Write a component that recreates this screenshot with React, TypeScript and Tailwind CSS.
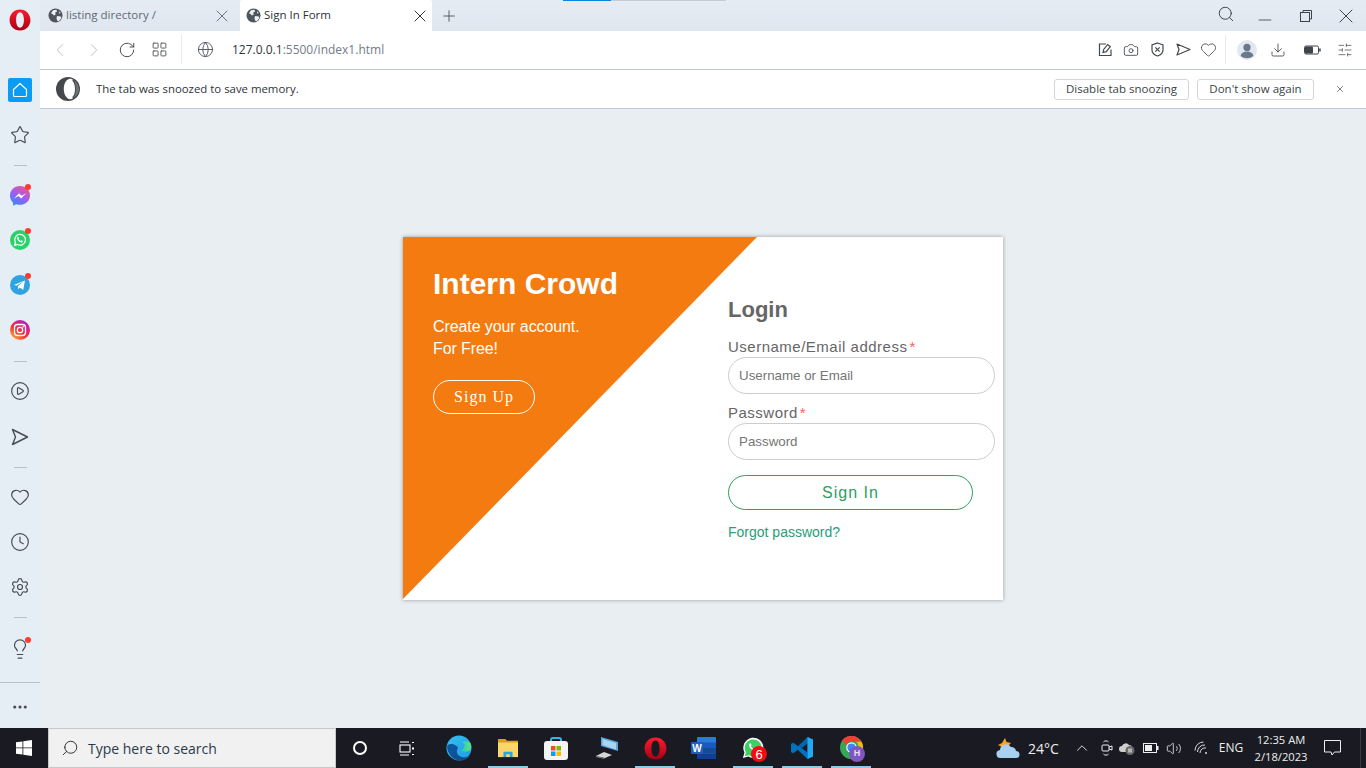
import React from "react";
import { Search, X, Plus, Minus, ChevronLeft, ChevronRight, RotateCw, LayoutGrid, Globe, Camera, Heart, Download, SlidersHorizontal, Star, CirclePlay, Clock, Settings, Lightbulb, Ellipsis, ChevronUp, Volume2 } from "lucide-react";

const ui = "font-['Open_Sans','Noto_Sans',sans-serif]";

function OperaLogo({ size = 22, id }: { size?: number; id: string }) {
  return (
    <svg width={size} height={size} viewBox="0 0 24 24">
      <defs>
        <linearGradient id={id} x1="0" y1="0" x2="0" y2="1">
          <stop offset="0" stopColor="#ff1b2d" />
          <stop offset="1" stopColor="#a70014" />
        </linearGradient>
      </defs>
      <path fillRule="evenodd" fill={`url(#${id})`} d="M12 0.5C5.4 0.5 0.6 5.6 0.6 12S5.4 23.5 12 23.5 23.4 18.4 23.4 12 18.6 0.5 12 0.5ZM12 3.6c2.6 0 4.3 3.7 4.3 8.4s-1.7 8.4-4.3 8.4S7.700 16.700 7.700 12 9.400 3.600 12 3.600Z" />
    </svg>
  );
}

function OperaDark() {
  return (
    <svg width="24" height="24" viewBox="0 0 24 24">
      <circle cx="12" cy="12" r="12" fill="#45494d" />
      <path fill="#fff" d="M14 1.800c-3.400.2-6.200 4.600-6.200 10.200s2.800 10 6.200 10.200c1 0 2-.3 3-1-1.800-1.900-3-5.300-3-9.200s1.200-7.300 3-9.200c-1-.7-2-1-3-1Z" />
      <path fill="#fff" d="M14.500 2.600c3.500 1.800 4.500 5.500 4.500 9.400s-1 7.600-4.500 9.400c-2.500-1.400-4-5-4-9.400s1.500-8 4-9.400Z" />
      <path fill="#6d7175" d="M17 2.700c3 1.700 6 4.700 6 9.300s-3 7.600-6 9.300c2-2 3-5.500 3-9.300s-1-7.300-3-9.300Z" />
    </svg>
  );
}

function TabGlobe() {
  return (
    <svg width="15" height="15" viewBox="0 0 15 15" className="shrink-0">
      <circle cx="7.500" cy="7.500" r="7" fill="#50565e" />
      <path fill="#eef2f6" d="M5 2.200 8.500 1.800 9 3.400 7 4.800 7.800 6.200 6 7.500 4.600 6 3 5.200ZM9 8l3.800 .5.600 1.500-2.600 3.200-1.500-.4-.8-2.300ZM11 3.200l1.800 1.800-1.500.6Z" />
    </svg>
  );
}

function Badge() {
  return <span className="absolute right-[9px] top-[3px] h-[6px] w-[6px] rounded-full bg-[#ff3b30]" />;
}

function SideIcon({ children, dot = false, className = "" }: { children: React.ReactNode; dot?: boolean; className?: string }) {
  return (
    <div className={`relative flex h-[30px] w-[40px] shrink-0 items-center justify-center ${className}`}>
      {children}
      {dot && <Badge />}
    </div>
  );
}

function Sep({ className = "" }: { className?: string }) {
  return <div className={`h-px w-[13px] shrink-0 bg-[#b9c2cb] ${className}`} />;
}

function Sidebar() {
  const c = "#474c54";
  return (
    <aside className="flex w-[40px] shrink-0 flex-col items-center bg-[#e5edf5]">
      <div className="flex h-[40px] items-center justify-center">
        <OperaLogo id="op1" />
      </div>
      <div className="mt-[35px] flex h-[30px] shrink-0 items-center justify-center">
        <div className="flex h-[24px] w-[24px] items-center justify-center rounded-[2px] bg-[#0a9bf5]">
          <svg width="16" height="16" viewBox="0 0 16 16" fill="none" stroke="#fff" strokeWidth="1.200" strokeLinejoin="round"><path d="M8 1.500 14.500 7.500V13.500a1 1 0 0 1-1 1h-11a1 1 0 0 1-1-1V7.500Z" /></svg>
        </div>
      </div>
      <div className="mt-[15px] flex flex-col items-center gap-[15px]">
        <SideIcon><Star size={20} color={c} strokeWidth={1.4} /></SideIcon>
        <Sep />
        <SideIcon dot>
          <svg width="20" height="20" viewBox="0 0 20 20">
            <defs>
              <linearGradient id="ms" x1="0.8" y1="0" x2="0.2" y2="1">
                <stop offset="0" stopColor="#f0568c" />
                <stop offset="0.5" stopColor="#a05cf0" />
                <stop offset="1" stopColor="#2f8dfb" />
              </linearGradient>
            </defs>
            <path fill="url(#ms)" d="M10 0C4.400 0 0 4.100 0 9.600c0 2.900 1.200 5.400 3.100 7.100v3.100l3-1.600c1.200.4 2.500.6 3.900.6 5.600 0 10-4.100 10-9.600S15.600 0 10 0Z" />
            <path fill="#fff" d="M4 12.500 9 7.200l2.600 2.600 4.600-2.600-5 5.400-2.600-2.700Z" />
          </svg>
        </SideIcon>
        <SideIcon dot className="-mt-px">
          <svg width="20" height="20" viewBox="0 0 20 20">
            <circle cx="10" cy="10" r="10" fill="#25d366" />
            <path fill="none" stroke="#fff" strokeWidth="1.300" d="M4.600 15.400 5.400 12.400a5.400 5.400 0 1 1 2.100 2.100Z" />
            <path fill="#fff" d="M8 6.800c.4 0 .5.100.7.500l.4.900-.5.800c.4.800 1.200 1.600 2.200 2l.7-.7.900.4c.5.200.6.400.5.800-.2.700-.9 1-1.600.9-2.200-.3-3.700-2-4.100-3.700-.2-1 .2-1.800.8-1.900Z" />
          </svg>
        </SideIcon>
        <SideIcon dot>
          <svg width="20" height="20" viewBox="0 0 20 20">
            <circle cx="10" cy="10" r="10" fill="#2fa3e0" />
            <path fill="#fff" d="M3.800 10 15 5.400l-1.800 9.600-3.300-2.400-1.700 1.700-.3-3 5-4.600-6.200 3.800Z" />
          </svg>
        </SideIcon>
        <SideIcon>
          <svg width="20" height="20" viewBox="0 0 20 20">
            <defs>
              <linearGradient id="ig" x1="0.1" y1="1" x2="0.9" y2="0">
                <stop offset="0" stopColor="#fdc13c" />
                <stop offset="0.4" stopColor="#f5342d" />
                <stop offset="0.75" stopColor="#d01f9a" />
                <stop offset="1" stopColor="#8a2be2" />
              </linearGradient>
            </defs>
            <circle cx="10" cy="10" r="10" fill="url(#ig)" />
            <rect x="4.500" y="4.500" width="11" height="11" rx="3" fill="none" stroke="#fff" strokeWidth="1.300" />
            <circle cx="10" cy="10" r="2.700" fill="none" stroke="#fff" strokeWidth="1.300" />
            <circle cx="13.200" cy="6.800" r=".8" fill="#fff" />
          </svg>
        </SideIcon>
        <Sep className="-mb-px mt-px" />
        <SideIcon><CirclePlay size={20} color={c} strokeWidth={1.4} /></SideIcon>
        <SideIcon className="mt-px">
          <svg width="18" height="18" viewBox="0 0 18 18" fill="none" stroke={c} strokeWidth="1.400" strokeLinejoin="round"><path d="M1.500 1.500 16.500 9 1.500 16.500 4.500 9Z" /></svg>
        </SideIcon>
        <Sep className="-mb-px" />
        <SideIcon><Heart size={20} color={c} strokeWidth={1.4} /></SideIcon>
        <SideIcon><Clock size={20} color={c} strokeWidth={1.4} /></SideIcon>
        <SideIcon><Settings size={20} color={c} strokeWidth={1.4} /></SideIcon>
        <Sep className="-mb-px" />
        <SideIcon>
          <Lightbulb size={22} color={c} strokeWidth={1.3} className="mt-[3px]" />
          <span className="absolute right-[9px] top-[5px] h-[6px] w-[6px] rounded-full bg-[#ff3b30]" />
        </SideIcon>
      </div>
      <div className="mt-auto flex h-[46px] w-full items-center justify-center border-t border-[#b9c2cb] pt-[2px]">
        <Ellipsis size={18} color={c} strokeWidth={2.2} />
      </div>
    </aside>
  );
}

function TabBar() {
  return (
    <div className="relative flex h-[31px] shrink-0 items-stretch bg-gradient-to-b from-[#e6ecf4] to-[#dfe6ef] text-[11.5px]">
      <div className="absolute left-[523px] top-0 h-px w-[48px] bg-[#0a84e0]" />
      <div className="absolute left-[571px] top-0 h-px w-[115px] bg-[#c4ccd6]" />
      <div className="flex w-[198px] items-center pl-[8px] pr-[6px] text-[#5f6a76]">
        <TabGlobe />
        <span className="mb-px ml-[3px]">listing directory /</span>
        <X size={20} color="#5f6a76" strokeWidth={1.1} className="ml-auto" />
      </div>
      <div className="ml-[2px] flex w-[192px] items-center rounded-t-[2px] bg-white pl-[6px] pr-[2px] text-[#2c323a]">
        <TabGlobe />
        <span className="mb-px ml-[3px]">Sign In Form</span>
        <X size={20} color="#30353b" strokeWidth={1.2} className="ml-auto" />
      </div>
      <div className="ml-[8px] flex items-center">
        <Plus size={18} color="#3d434a" strokeWidth={1.1} />
      </div>
      <div className="ml-auto flex items-center">
        <Search size={18} color="#3d434a" strokeWidth={1.3} className="mb-[3px]" />
        <div className="ml-[20px] mt-[9px] flex"><Minus size={20} color="#3d434a" strokeWidth={1} /></div>
        <svg className="ml-[24px]" width="14" height="14" viewBox="0 0 14 14" fill="none" stroke="#3d434a" strokeWidth="1"><rect x="1.500" y="3.500" width="9" height="9" /><path d="M4 3.500V1.500h8.500V10h-2" /></svg>
        <div className="ml-[21px] mr-[8px] flex"><X size={24} color="#3d434a" strokeWidth={1} /></div>
      </div>
    </div>
  );
}

function ToolBar() {
  const c = "#43484f";
  return (
    <div className="flex h-[39px] shrink-0 items-center border-b border-[#bcc5cf] bg-white pb-[1px]">
      <div className="ml-[9px] flex"><ChevronLeft size={22} color="#c6ccd3" strokeWidth={1.1} /></div>
      <div className="ml-[12px] flex"><ChevronRight size={22} color="#c6ccd3" strokeWidth={1.1} /></div>
      <div className="ml-[13px] flex"><RotateCw size={18} color={c} strokeWidth={1.3} /></div>
      <div className="ml-[15px] flex"><LayoutGrid size={17} color={c} strokeWidth={1.2} /></div>
      <div className="ml-[13px] h-[29px] w-px bg-[#e6e9ed]" />
      <div className="ml-[15px] flex"><Globe size={17} color={c} strokeWidth={1.2} /></div>
      <span className="ml-[18px] text-[12px] text-[#2f343a]">127.0.0.1<span className="text-[#727c88]">:5500/index1.html</span></span>
      <div className="ml-auto flex items-center">
        <svg width="15" height="15" viewBox="0 0 15 15" fill="none" stroke={c} strokeWidth="1.200"><path d="M8 2H1.500v11.500H13V7.500" /><path d="M5 10.500l.7-3 4-5 2.600 2.200-4 5Z" /></svg>
        <div className="ml-[10px] flex"><Camera size={16} color={c} strokeWidth={1.3} /></div>
        <svg className="ml-[11px]" width="15" height="15" viewBox="0 0 15 15" fill="none" stroke={c} strokeWidth="1.200"><path d="M7.500 1 13 3v5c0 3-2.500 5-5.500 6C4.500 13 2 11 2 8V3Z" /><path d="M5.300 5.300l4.400 4.400M9.700 5.300l-4.400 4.400" /></svg>
        <svg className="ml-[11px]" width="15" height="15" viewBox="0 0 15 15" fill="none" stroke={c} strokeWidth="1.200" strokeLinejoin="round"><path d="M1 2 14 7.500 1 13 3 7.500Z" /></svg>
        <div className="ml-[9px] flex"><Heart size={17} color={c} strokeWidth={1.2} /></div>
        <div className="ml-[8px] h-[29px] w-px bg-[#e6e9ed]" />
        <svg className="ml-[11px]" width="20" height="20" viewBox="0 0 20 20"><circle cx="10" cy="10" r="10" fill="#e1e8f0" /><circle cx="10" cy="7.400" r="3.600" fill="#69788a" /><path fill="#69788a" d="M3.600 16c.4-3 3-4.500 6.400-4.500s6 1.500 6.400 4.500a10 10 0 0 1-12.800 0Z" /></svg>
        <div className="ml-[13px] flex"><Download size={16} color={c} strokeWidth={1.3} /></div>
        <svg className="ml-[18px]" width="17" height="10" viewBox="0 0 17 10"><rect x="0.500" y="1" width="14" height="8" rx="1.500" fill="none" stroke="#3f444b" /><rect x="1" y="1.500" width="8" height="7" rx="1" fill="#3f444b" /><rect x="15.200" y="3.500" width="1.500" height="3" fill="#3f444b" /></svg>
        <div className="ml-[16px] mr-[13px] flex"><SlidersHorizontal size={16} color={c} strokeWidth={1.1} /></div>
      </div>
    </div>
  );
}

function InfoBar() {
  return (
    <div className="flex h-[39px] shrink-0 items-center border-b border-[#bfcbd8] bg-white text-[11.5px] text-[#2f343a]">
      <div className="ml-[16px] flex"><OperaDark /></div>
      <span className="ml-[16px] text-[11.4px]">The tab was snoozed to save memory.</span>
      <button className="ml-auto flex h-[21px] w-[135px] items-center justify-center rounded-[3px] border border-[#d3d7dc] bg-white text-[#3a3f46]">Disable tab snoozing</button>
      <button className="ml-[8px] flex h-[21px] w-[117px] items-center justify-center rounded-[3px] border border-[#d3d7dc] bg-white text-[#3a3f46]">Don't show again</button>
      <div className="ml-[21px] mr-[21px] flex"><X size={10} color="#3a3f46" strokeWidth={1.6} /></div>
    </div>
  );
}

function Field({ label, placeholder }: { label: string; placeholder: string }) {
  return (
    <div>
      <div className="h-[20px] text-[15px] leading-[20px] tracking-[0.5px] text-[#666]">
        {label}<span className="ml-[2px] text-[#f5635c]">*</span>
      </div>
      <div className="flex h-[37px] w-[267px] items-center rounded-full border border-[#ccc] bg-white pl-[10px] text-[13.33px] text-[#757575]">
        {placeholder}
      </div>
    </div>
  );
}

function LoginCard() {
  return (
    <div className="relative flex h-[363px] w-[600px] overflow-hidden bg-white font-['Liberation_Sans',sans-serif] shadow-[0_0_4px_rgba(0,0,0,0.35)]">
      <div className="absolute inset-x-0 top-0 h-[362px] w-[354px] bg-[#f37b10] [clip-path:polygon(0_0,100%_0,0_100%)]" />
      <div className="relative w-[325px] pl-[30px] pt-[29px] text-white">
        <h1 className="text-[30px] font-bold leading-[36px]">Intern Crowd</h1>
        <p className="mt-[14px] text-[16px] leading-[22px] tracking-[-0.1px]">Create your account.<br />For Free!</p>
        <button className="mt-[20px] flex h-[34px] w-[102px] items-center justify-center rounded-full border border-white font-['Liberation_Serif',serif] text-[16px] tracking-[1px] text-white">Sign Up</button>
      </div>
      <div className="relative pt-[59px]">
        <h2 className="text-[22px] font-bold leading-[28px] text-[#666]">Login</h2>
        <div className="mt-[13px] flex flex-col gap-[9px]">
          <Field label="Username/Email address" placeholder="Username or Email" />
          <Field label="Password" placeholder="Password" />
        </div>
        <button className="mt-[15px] flex h-[35px] w-[245px] items-center justify-center rounded-full border border-[#2e9e62] bg-white text-[16px] tracking-[1px] text-[#2e9e62]">Sign In</button>
        <div className="mt-[13px] text-[14px] leading-[18px] text-[#2a9d78]">Forgot password?</div>
      </div>
    </div>
  );
}

function TaskApp({ children, ml, active = true }: { children: React.ReactNode; ml: string; active?: boolean }) {
  return (
    <div className={`relative flex h-full w-[40px] shrink-0 items-center justify-center ${ml}`}>
      {children}
      {active && <span className="absolute inset-x-0 bottom-0 h-[2px] bg-[#8cc8ea]" />}
    </div>
  );
}

function Taskbar() {
  return (
    <footer className="flex h-[40px] shrink-0 items-stretch bg-[#1a1b22] text-[#eee] [&>*]:shrink-0">
      <div className="flex w-[48px] items-center justify-center">
        <svg width="16" height="16" viewBox="0 0 16 16" fill="#fff"><path d="M0 2.300 6.500 1.400V7.500H0ZM7.300 1.300 16 0V7.500H7.300ZM0 8.300H6.500V14.600L0 13.700ZM7.300 8.300H16V16L7.300 14.700Z" /></svg>
      </div>
      <div className="flex w-[288px] items-center border border-[#c9c9c9] bg-[#f1f1f1] pl-[12px] text-[14px] text-[#2b3a4a]">
        <Search size={18} color="#222" strokeWidth={1.2} className="-scale-x-100" />
        <span className="ml-[9px]">Type here to search</span>
      </div>
      <div className="flex w-[48px] items-center justify-center">
        <span className="h-[14px] w-[14px] rounded-full border-2 border-white" />
      </div>
      <div className="flex w-[46px] items-center justify-center">
        <svg width="17" height="15" viewBox="0 0 17 15" fill="none" stroke="#fff" strokeWidth="1.100"><path d="M1 1H10M1 14H10" /><rect x="1" y="4" width="10" height="7" /><path d="M14 1v1M14 6.500v2M14 13v1" strokeWidth="2" /></svg>
      </div>
      <div className="flex w-[58px] items-center justify-center">
        <svg width="26" height="26" viewBox="0 0 26 26">
          <defs>
            <linearGradient id="ed1" x1="0" y1="0" x2="1" y2="1"><stop offset="0" stopColor="#35c1f1" /><stop offset="1" stopColor="#1b9de2" /></linearGradient>
            <linearGradient id="ed2" x1="0" y1="0" x2="1" y2="1"><stop offset="0" stopColor="#0c59a4" /><stop offset="1" stopColor="#114a8b" /></linearGradient>
            <linearGradient id="ed3" x1="0" y1="0" x2="1" y2="0"><stop offset="0" stopColor="#30cfa8" /><stop offset="1" stopColor="#5be08a" /></linearGradient>
          </defs>
          <circle cx="13" cy="13" r="12.500" fill="url(#ed1)" />
          <path fill="url(#ed2)" d="M1 11c.5 8 6 14.500 13 14.500 4.500 0 8-1.800 10-5-3 2-7.500 2.500-10.500.5-2.500-1.500-3.500-5-1.500-8-1-3-8-6-11-2Z" />
          <path fill="url(#ed3)" d="M15 15.500c3 1.500 6 1.500 9.500-.5.8-2 1-4 .3-6-1-3-5.500-3.500-8.500-2 2 1 3 3 2 5-.7 1.800-2 3-3.300 3.500Z" />
        </svg>
      </div>
      <TaskApp ml="">
        <svg width="22" height="20" viewBox="0 0 24 22"><path fill="#d9a21a" d="M1 1h8l2 2h12v4H1Z" /><rect x="1" y="5" width="22" height="16" fill="#fbd668" /><path fill="#2aa3e8" d="M7 21v-6h10v6h-3v-3h-4v3Z" /></svg>
      </TaskApp>
      <TaskApp ml="ml-[8px]" active={false}>
        <svg width="24" height="24" viewBox="0 0 24 24"><path fill="none" stroke="#2fb8ee" strokeWidth="2" d="M7 7V4a2 2 0 0 1 2-2h6a2 2 0 0 1 2 2v3" /><rect y="5" width="24" height="19" rx="3" fill="#f4f4f4" /><rect x="7" y="10" width="4.500" height="4.500" fill="#f25022" /><rect x="12.500" y="10" width="4.500" height="4.500" fill="#7fba00" /><rect x="7" y="15.500" width="4.500" height="4.500" fill="#00a4ef" /><rect x="12.500" y="15.500" width="4.500" height="4.500" fill="#ffb900" /></svg>
      </TaskApp>
      <TaskApp ml="ml-[11px]" active={false}>
        <svg width="24" height="22" viewBox="0 0 24 22"><path fill="#5ba6dc" d="M6 0 23 5v9L6 9Z" /><path fill="#a9d5f0" d="M7.500 2 21 6v6.500L7.500 8Z" /><path fill="#d6d6d6" d="M1 19l8-4 8 3-7 3Z" /><path fill="#8f8f8f" d="M1 19l9 2.500v.5L1 20Z" /></svg>
      </TaskApp>
      <TaskApp ml="ml-[8px]"><OperaLogo id="op3" size={23} /></TaskApp>
      <TaskApp ml="ml-[8px]" active={false}>
        <svg width="25" height="22" viewBox="0 0 25 22"><rect x="6" y="0" width="19" height="22" rx="1" fill="#2b7cd3" /><rect x="6" y="5.500" width="19" height="5.500" fill="#185abd" /><rect x="6" y="11" width="19" height="5.500" fill="#134a9a" /><rect x="6" y="16.500" width="19" height="5.500" fill="#103f91" /><rect x="0" y="5" width="12" height="12" rx="1" fill="#1c5fbe" /><text x="6" y="14.500" fontSize="10" fontWeight="700" fill="#fff" textAnchor="middle" fontFamily="Liberation Sans">W</text></svg>
      </TaskApp>
      <TaskApp ml="ml-[10px]">
        <svg width="22" height="22" viewBox="0 0 24 24"><path fill="#fff" d="M1 23l1.700-6A11 11 0 1 1 7 21.400Z" /><path fill="#3ecf63" d="M3 21l1.300-4.300a9.200 9.200 0 1 1 3.200 3.100Z" /><path fill="#fff" d="M9 6.800c.5 0 .7.200.9.700l.6 1.400-.8 1.100c.7 1.200 1.700 2.200 3.100 2.800l1-1 1.400.7c.6.300.7.500.6 1-.3 1-1.300 1.500-2.300 1.300-3-.5-5.100-2.700-5.800-5.200-.2-1.400.4-2.700 1.300-2.800Z" /></svg>
        <span className="absolute bottom-[6px] right-[6px] flex h-[16px] w-[16px] items-center justify-center rounded-full bg-[#f30a12] font-['Liberation_Sans',sans-serif] text-[13px] leading-none text-white">6</span>
      </TaskApp>
      <TaskApp ml="ml-[9px]">
        <svg width="24" height="24" viewBox="0 0 24 24"><path fill="#0065a9" d="M17.500 1 7.800 10.300 3.200 6.800 1 8v8l2.200 1.200 4.600-3.500L17.500 23l5.500-2.500v-17ZM17.500 7.500v9l-5.800-4.500Z" /><path fill="#23a9f2" d="M17.500 1 23 3.500v17L17.500 23Z" /><path fill="#007acc" d="M1 8l2.200-1.200 14.300 10V23L7.800 13.700 3.200 17.200 1 16Z" opacity=".6" /></svg>
      </TaskApp>
      <TaskApp ml="ml-[9px]">
        <svg className="mb-[2px]" width="23" height="23" viewBox="0 0 24 24"><circle cx="12" cy="12" r="12" fill="#34a853" /><path fill="#ea4335" d="M12 0a12 12 0 0 1 10.400 6H12a6 6 0 0 0-5.700 4L2.200 4.500A12 12 0 0 1 12 0Z" /><path fill="#fbbc05" d="M22.400 6a12 12 0 0 1-6.300 17.300L18 14a6 6 0 0 0-1-8Z" /><circle cx="12" cy="12" r="5.500" fill="#fff" /><circle cx="12" cy="12" r="4.300" fill="#4285f4" /></svg>
        <span className="absolute bottom-[6px] right-[6px] flex h-[16px] w-[16px] items-center justify-center rounded-full bg-[#7e57c2] font-['Liberation_Sans',sans-serif] text-[9px] font-bold text-[#e8dcf7]">H</span>
      </TaskApp>
      <div className="ml-[125px] flex w-[24px] items-center justify-center">
        <svg width="24" height="22" viewBox="0 0 24 22"><path fill="#f5a623" d="M9 1l1.500 4L15 6l-3 3-6 1-4-2 4-2Z" /><path fill="#a9d0f0" d="M5 21a4 4 0 0 1-1-8 6 6 0 0 1 11-3 4.500 4.500 0 0 1 5 4 3.500 3.500 0 0 1 0 7Z" /></svg>
      </div>
      <div className="ml-[8px] flex w-[40px] items-center text-[14px]">24°C</div>
      <div className="ml-[5px] flex w-[18px] items-center justify-center"><ChevronUp size={20} color="#eee" strokeWidth={1.2} /></div>
      <div className="ml-[10px] flex w-[12px] items-center justify-center">
        <svg width="12" height="18" viewBox="0 0 12 18" fill="none" stroke="#eee" strokeWidth="1"><rect x="1" y="6" width="7" height="6" rx="1" /><path d="M8 8l3-1v4l-3-1M2.500 3c1-1.500 4-1.500 5 0M2.500 15c1 1.500 4 1.500 5 0" /></svg>
      </div>
      <div className="ml-[6px] flex w-[16px] items-center justify-center">
        <svg width="16" height="13" viewBox="0 0 16 13"><path fill="#cfcfcf" d="M3 10a3 3 0 0 1 0-6 4 4 0 0 1 7-1 3 3 0 0 1 3 3H8v4Z" /><circle cx="11" cy="8.500" r="4.500" fill="#6b6b6b" /><path stroke="#fff" strokeWidth="1" d="M10 6.500v4M12 6.500v4" /></svg>
      </div>
      <div className="ml-[8px] flex w-[16px] items-center justify-center">
        <svg width="16" height="10" viewBox="0 0 16 10"><rect x=".5" y=".5" width="13" height="9" fill="none" stroke="#eee" /><rect x="2" y="2" width="7" height="6" fill="#eee" /><rect x="14" y="3" width="1.500" height="4" fill="#eee" /></svg>
      </div>
      <div className="ml-[7px] flex w-[16px] items-center justify-center"><Volume2 size={17} color="#eee" strokeWidth={1.2} /></div>
      <div className="ml-[11px] flex w-[16px] items-center justify-center">
        <svg width="14" height="14" viewBox="0 0 14 14" fill="none" stroke="#ddd" strokeWidth="1"><path d="M1 9.500A8.500 8.500 0 0 1 9.500 1M3.500 11A7 7 0 0 1 11 4M6 12A5 5 0 0 1 12 7" /><circle cx="12" cy="12" r="1" fill="#ddd" stroke="none" /></svg>
      </div>
      <div className="ml-[8px] flex w-[28px] items-center justify-center text-[12px]">ENG</div>
      <div className="ml-px flex w-[70px] flex-col items-center justify-center text-[11.2px] leading-[17px]">
        <span>12:35 AM</span>
        <span>2/18/2023</span>
      </div>
      <div className="ml-[4px] flex w-[24px] items-center justify-center">
        <svg width="17" height="16" viewBox="0 0 17 16" fill="none" stroke="#eee" strokeWidth="1"><path d="M.5.5h16v11.500h-6l-2.500 3-1-3H.5Z" /></svg>
      </div>
      <div className="ml-auto mr-[5px] w-px bg-[#3a3b42]" />
    </footer>
  );
}

export default function App() {
  return (
    <div className={`flex h-[768px] w-[1366px] flex-col overflow-hidden bg-[#e9eef3] ${ui}`}>
      <div className="flex min-h-0 flex-1">
        <Sidebar />
        <div className="flex min-w-0 flex-1 flex-col">
          <TabBar />
          <ToolBar />
          <InfoBar />
          <main className="flex flex-1 items-center justify-center bg-[#e9eef3]">
            <LoginCard />
          </main>
        </div>
      </div>
      <Taskbar />
    </div>
  );
}
